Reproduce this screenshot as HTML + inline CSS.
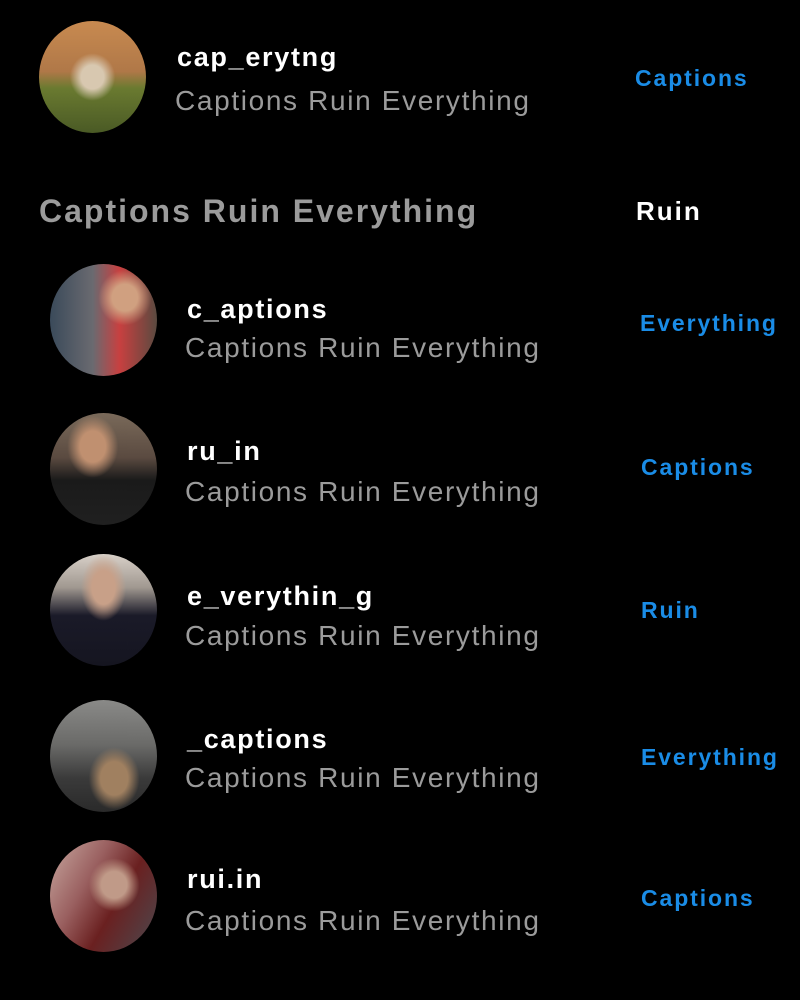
<!DOCTYPE html>
<html><head><meta charset="utf-8"><style>
body{margin:0;width:800px;height:1000px;background:#000;position:relative;overflow:hidden;font-family:"Liberation Sans",sans-serif}
.a{position:absolute;width:107px;height:112px;border-radius:50%}
.t{position:absolute;white-space:nowrap;line-height:1}
.n{color:#fff;font-weight:bold;font-size:27px;letter-spacing:1.7px}
.s{color:#9b9b9b;font-size:28px;letter-spacing:1.65px}
.b{color:#1a8ce6;font-weight:bold;font-size:23px;letter-spacing:1.9px}
</style></head><body>
<div class="a" style="left:39px;top:21px;background:radial-gradient(ellipse at 50% 50%,#d8c8b0 0 15%,transparent 30%),linear-gradient(#c88a50 0%,#b07848 45%,#6a7a30 60%,#4a5a25 100%)"></div>
<div class="t n" style="left:177px;top:44px">cap_erytng</div>
<div class="t s" style="left:175px;top:87px">Captions Ruin Everything</div>
<div class="t b" style="left:635px;top:67px">Captions</div>

<div class="t" style="left:39px;top:195px;color:#9b9b9b;font-weight:bold;font-size:32px;letter-spacing:2px">Captions Ruin Everything</div>
<div class="t" style="left:636px;top:198px;color:#fff;font-weight:bold;font-size:26px;letter-spacing:2px">Ruin</div>

<div class="a" style="left:50px;top:264px;background:radial-gradient(ellipse at 70% 30%,#d0a080 0 12%,transparent 25%),linear-gradient(90deg,#3a4a5a 0%,#6a6a70 40%,#c84040 65%,#5a4a40 100%)"></div>
<div class="t n" style="left:187px;top:296px">c_aptions</div>
<div class="t s" style="left:185px;top:334px">Captions Ruin Everything</div>
<div class="t b" style="left:640px;top:312px">Everything</div>

<div class="a" style="left:50px;top:413px;background:radial-gradient(ellipse at 40% 30%,#c09070 0 14%,transparent 28%),linear-gradient(#7a6a5a 0%,#5a4a40 40%,#1a1a1a 60%,#202020 100%)"></div>
<div class="t n" style="left:187px;top:438px">ru_in</div>
<div class="t s" style="left:185px;top:478px">Captions Ruin Everything</div>
<div class="t b" style="left:641px;top:456px">Captions</div>

<div class="a" style="left:50px;top:554px;background:radial-gradient(ellipse at 50% 30%,#c8a088 0 15%,transparent 30%),linear-gradient(#d8d0c8 0%,#a09890 30%,#1a1a28 55%,#151520 100%)"></div>
<div class="t n" style="left:187px;top:583px">e_verythin_g</div>
<div class="t s" style="left:185px;top:622px">Captions Ruin Everything</div>
<div class="t b" style="left:641px;top:599px">Ruin</div>

<div class="a" style="left:50px;top:700px;background:radial-gradient(ellipse at 60% 70%,#a08060 0 15%,transparent 28%),linear-gradient(#8a8a88 0%,#6a6a68 40%,#3a3a3a 70%,#2a2a2a 100%)"></div>
<div class="t n" style="left:187px;top:726px">_captions</div>
<div class="t s" style="left:185px;top:764px">Captions Ruin Everything</div>
<div class="t b" style="left:641px;top:746px">Everything</div>

<div class="a" style="left:50px;top:840px;background:radial-gradient(ellipse at 60% 40%,#c09a88 0 14%,transparent 28%),linear-gradient(120deg,#c8a8a0 0%,#9a6060 35%,#6a2020 60%,#4a4a50 100%)"></div>
<div class="t n" style="left:187px;top:866px">rui.in</div>
<div class="t s" style="left:185px;top:907px">Captions Ruin Everything</div>
<div class="t b" style="left:641px;top:887px">Captions</div>
</body></html>
